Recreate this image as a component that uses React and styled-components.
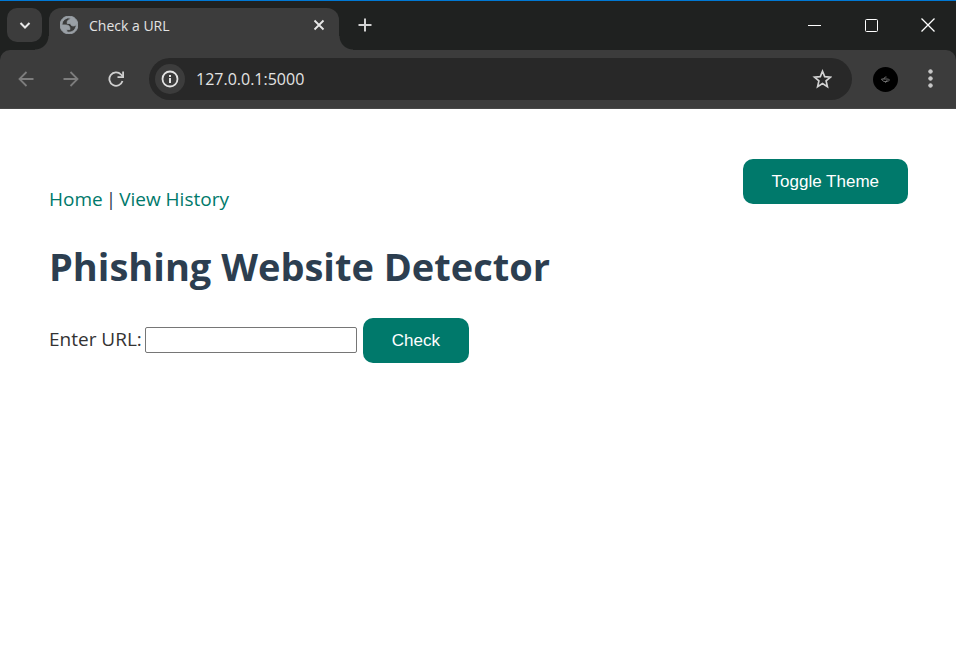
import React from "react";
import styled, { createGlobalStyle } from "styled-components";

const GlobalStyle = createGlobalStyle`
  * { box-sizing: border-box; }
  body {
    margin: 0;
    background: #ffffff;
    font-family: "Segoe UI", "Open Sans", "Noto Sans", sans-serif;
  }
  button { font: inherit; border: 0; padding: 0; cursor: pointer; }
  svg { display: block; }
`;

const TabStrip = styled.header`
  display: flex;
  height: 50px;
  padding-left: 7px;
  border-top: 1px solid #0078d4;
  background: #1f2120;
`;

const TabSearch = styled.button`
  display: grid;
  place-items: center;
  width: 35px;
  height: 34px;
  margin: 7px 7px 0 0;
  border-radius: 10px;
  background: #3c3c3c;
  color: #e8e8e8;
`;

const Tab = styled.div`
  position: relative;
  display: flex;
  align-items: center;
  flex: 0 1 290px;
  height: 42px;
  margin-top: 7px;
  padding: 0 11px 8px 11px;
  border-radius: 12px 12px 0 0;
  background: #3c3c3c;
  color: #e3e3e3;
  font-size: 14px;

  &::before,
  &::after {
    content: "";
    position: absolute;
    bottom: 0;
    width: 14px;
    height: 14px;
  }
  &::before {
    left: -14px;
    background: radial-gradient(circle at 0 0, transparent 13px, #3c3c3c 14px);
  }
  &::after {
    right: -14px;
    background: radial-gradient(circle at 100% 0, transparent 13px, #3c3c3c 14px);
  }
`;

const TabTitle = styled.span`
  flex: 1;
  margin-left: 11px;
  white-space: nowrap;
`;

const IconButton = styled.button`
  display: grid;
  place-items: center;
  width: ${(p) => p.$size || 18}px;
  height: ${(p) => p.$size || 18}px;
  flex: none;
  border-radius: 50%;
  background: ${(p) => p.$bg || "transparent"};
  color: ${(p) => p.$color || "#d2d2d2"};
`;

const NewTab = styled(IconButton)`
  margin: 12px auto 0 14px;
`;

const WindowControls = styled.div`
  display: grid;
  grid-template-columns: 57px 57px 56px;
  height: 48px;
`;

const WindowButton = styled.button`
  display: grid;
  place-items: center;
  background: transparent;
  color: #ffffff;
`;

const ToolbarBack = styled.div`
  background: #1f2120;
`;

const Toolbar = styled.div`
  display: flex;
  align-items: center;
  height: 59px;
  padding: 0 13px 0 14px;
  border-bottom: 1px solid #474747;
  border-radius: 10px 10px 0 0;
  background: #3c3c3c;
`;

const NavButtons = styled.div`
  display: flex;
  gap: 21px;
  margin-right: 21px;
`;

const AddressBar = styled.div`
  display: flex;
  align-items: center;
  flex: 1;
  height: 42px;
  padding: 0 18px 0 6px;
  border-radius: 21px;
  background: #282828;
`;

const Address = styled.input`
  flex: 1;
  min-width: 0;
  margin-left: 11px;
  padding: 0;
  border: 0;
  outline: 0;
  background: transparent;
  color: #e3e3e3;
  font: 16px "Segoe UI", "Open Sans", sans-serif;
`;

const Profile = styled(IconButton)`
  margin: 0 21px;
`;

const Page = styled.main`
  padding: 50px 48px 40px 49px;
  color: #333333;
  font-size: 19px;
  line-height: 28px;
`;

const PageTop = styled.div`
  display: flex;
  justify-content: space-between;
  align-items: flex-start;
`;

const Links = styled.nav`
  display: flex;
  gap: 3px;
  padding-top: 26px;
  color: #2c3e50;
`;

const PageLink = styled.a`
  color: #00796b;
  text-decoration: none;
`;

const ActionButton = styled.button`
  height: 45px;
  padding: 0 29px;
  border-radius: 10px;
  background: #00796b;
  color: #ffffff;
  font: 17px "Liberation Sans", Arial, sans-serif;
`;

const Title = styled.h1`
  margin: 26px 0 25px;
  color: #2c3e50;
  font-size: 38px;
  font-weight: 700;
  line-height: 54px;
`;

const UrlForm = styled.form`
  display: flex;
  align-items: center;
`;

const UrlLabel = styled.label`
  padding-bottom: 3px;
`;

const UrlInput = styled.input`
  width: 212px;
  height: 26px;
  margin: 0 6px 2px 3px;
  padding: 1px 2px;
  border: 1px solid #767676;
  border-radius: 2px;
  background: #ffffff;
  font: 17px "Liberation Sans", Arial, sans-serif;
`;

const Icon = ({ size = 18, stroke = 2, box, children, ...rest }) => (
  <svg
    width={size}
    height={size}
    viewBox={box || `0 0 ${size} ${size}`}
    fill="none"
    stroke="currentColor"
    strokeWidth={stroke}
    aria-hidden="true"
    {...rest}
  >
    {children}
  </svg>
);

const SolidIcon = (props) => <Icon {...props} stroke="none" fill="currentColor" />;

const Favicon = styled(SolidIcon)`
  flex: none;
  color: #9aa0a6;
`;

export default function App() {
  return (
    <>
      <GlobalStyle />
      <TabStrip>
        <TabSearch aria-label="Search tabs">
          <Icon size={12}><path d="M1.5 4 6 8.5 10.5 4" /></Icon>
        </TabSearch>
        <Tab>
          <Favicon size={18} box="2 2 20 20">
            <path fillRule="evenodd" d="M12 2c5.523 0 10 4.477 10 10s-4.477 10-10 10S2 17.523 2 12 6.477 2 12 2ZM4 12h4.400c3.407.022 4.922 1.730 4.543 5.127H9.488v2.470a8.004 8.004 0 0 0 10.498-8.083C19.327 12.504 18.332 13 17 13c-2.137 0-3.206-.916-3.206-2.750h-3.748c-.274-2.728.683-4.092 2.870-4.092 0-.975.327-1.597.811-1.970A8.004 8.004 0 0 0 4 12Z" />
          </Favicon>
          <TabTitle>Check a URL</TabTitle>
          <IconButton aria-label="Close tab" $color="#e8e8e8">
            <Icon size={12} stroke={1.8}><path d="m1.500 1.500 9 9m0-9-9 9" /></Icon>
          </IconButton>
        </Tab>
        <NewTab aria-label="New tab" $size={24}>
          <Icon size={14}><path d="M7 .5v13M.5 7h13" /></Icon>
        </NewTab>
        <WindowControls>
          <WindowButton aria-label="Minimize">
            <Icon size={13} stroke={1}><path d="M0 6.500h13" /></Icon>
          </WindowButton>
          <WindowButton aria-label="Maximize">
            <Icon size={13} stroke={1}><rect x=".5" y=".5" width="12" height="12" rx="1" /></Icon>
          </WindowButton>
          <WindowButton aria-label="Close window">
            <Icon size={14} stroke={1.3}><path d="m.5.5 13 13m0-13-13 13" /></Icon>
          </WindowButton>
        </WindowControls>
      </TabStrip>
      <ToolbarBack>
        <Toolbar>
          <NavButtons>
            <IconButton aria-label="Back" $size={24} $color="#7d7d7d">
              <Icon size={16} stroke={1.8}><path d="M15.500 8H2m6.500-7L1.500 8l7 7" /></Icon>
            </IconButton>
            <IconButton aria-label="Forward" $size={24} $color="#7d7d7d">
              <Icon size={16} stroke={1.8}><path d="M.5 8H14M7.500 1l7 7-7 7" /></Icon>
            </IconButton>
            <IconButton aria-label="Reload" $size={24} $color="#cfcfcf">
              <Icon size={16} stroke={1.8}>
                <path d="M14.500 10A6.700 6.700 0 1 1 13 3.500L15 5.700" />
                <path d="M15.100.5v5.700H9.500" />
              </Icon>
            </IconButton>
          </NavButtons>
          <AddressBar>
            <IconButton aria-label="Site information" $size={30} $bg="#3c3c3c" $color="#e3e3e3">
              <Icon size={18}>
                <circle cx="9" cy="9" r="7.500" strokeWidth="1.800" />
                <path d="M9 8v5M9 5v2" />
              </Icon>
            </IconButton>
            <Address aria-label="Address" defaultValue="127.0.0.1:5000" />
            <IconButton aria-label="Bookmark this page" $size={24}>
              <Icon size={20} stroke={1.7}>
                <path d="m10.500 2.200 2.200 5.400 5.800.5-4.400 3.800 1.300 5.700-4.900-3-4.900 3 1.300-5.700-4.400-3.800 5.800-.5Z" />
              </Icon>
            </IconButton>
          </AddressBar>
          <Profile aria-label="Profile" $size={25} $bg="#000000" $color="#888888">
            <Icon size={9} stroke={0.8}>
              <path d="M.5 4h5.500c1 0 2 .300 2.500 1M.5 4C1.500 6 2.500 6.500 4 6.500S7.500 6.500 8.500 5M3 4c0-1.500 1-2 2.500-2M6 5c0 1.500-1 2.500-2 2.500" />
            </Icon>
          </Profile>
          <IconButton aria-label="Browser menu" $size={24} $color="#c8c8c8">
            <SolidIcon size={20}>
              <circle cx="9.500" cy="2.500" r="1.800" />
              <circle cx="9.500" cy="9.500" r="1.800" />
              <circle cx="9.500" cy="16.500" r="1.800" />
            </SolidIcon>
          </IconButton>
        </Toolbar>
      </ToolbarBack>
      <Page>
        <PageTop>
          <Links>
            <PageLink href="#home">Home</PageLink>
            <span>|</span>
            <PageLink href="#history">View History</PageLink>
          </Links>
          <ActionButton type="button">Toggle Theme</ActionButton>
        </PageTop>
        <Title>Phishing Website Detector</Title>
        <UrlForm onSubmit={(e) => e.preventDefault()}>
          <UrlLabel htmlFor="url">Enter URL:</UrlLabel>
          <UrlInput id="url" name="url" type="text" />
          <ActionButton type="submit">Check</ActionButton>
        </UrlForm>
      </Page>
    </>
  );
}
